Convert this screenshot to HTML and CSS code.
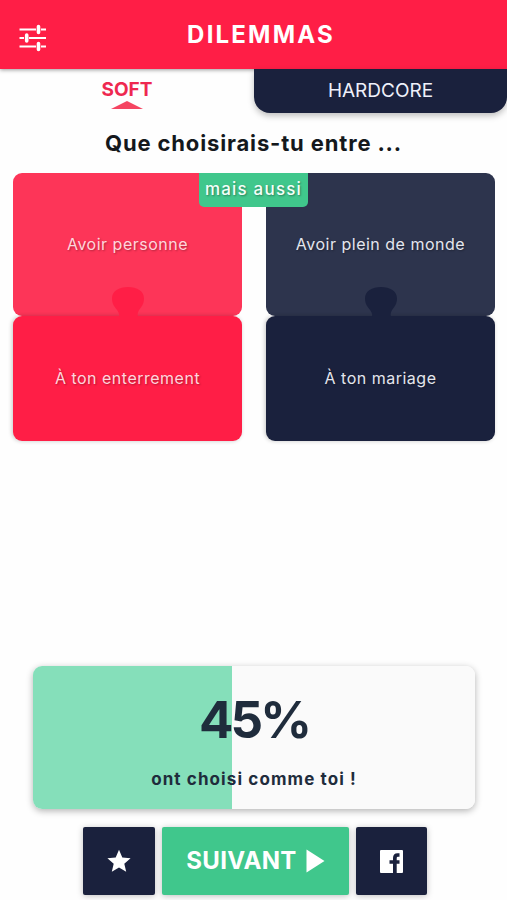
FILE: index.html
```
<!DOCTYPE html>
<html lang="fr">
<head>
<meta charset="UTF-8">
<meta name="viewport" content="width=device-width, initial-scale=1.0">
<title>Dilemmas</title>
<link rel="stylesheet" href="styles.css">
</head>
<body>
  <header class="header">
    <svg class="settings" viewBox="0 0 28 28">
      <path d="M0.500 5.500H17M22 5.500H27M0.500 14H5M10 14H27M0.500 22.500H17M22 22.500H27" stroke="#fff" stroke-width="2"/>
      <path d="M19.500 2.500V8.500M7.700 11V17M19.500 19.500V25.500" stroke="#fff" stroke-width="3.600" stroke-linecap="round"/>
    </svg>
    <h1 class="title">DILEMMAS</h1>
  </header>

  <nav class="tabs">
    <div class="tab tab-soft">
      <span>SOFT</span>
      <span class="arrow"></span>
    </div>
    <div class="tab tab-hardcore">HARDCORE</div>
  </nav>

  <main>
    <h2 class="question">Que choisirais-tu entre ...</h2>

    <div class="choices">
      <div class="choice red">
        <div class="top">
          <span>Avoir personne</span>
          <svg class="knob" viewBox="0 0 34 32"><path d="M8 32C9 29 7 26 4.500 23C2 20 1 17 1 13.500C1 6 8 2 17 2S33 6 33 13.500C33 17 32 20 29.500 23C27 26 26 29 27 32Z"/></svg>
        </div>
        <div class="bottom"><span>À ton enterrement</span></div>
      </div>
      <div class="choice blue">
        <div class="top">
          <span>Avoir plein de monde</span>
          <svg class="knob" viewBox="0 0 34 32"><path d="M8 32C9 29 7 26 4.500 23C2 20 1 17 1 13.500C1 6 8 2 17 2S33 6 33 13.500C33 17 32 20 29.500 23C27 26 26 29 27 32Z"/></svg>
        </div>
        <div class="bottom"><span>À ton mariage</span></div>
      </div>
      <div class="badge">mais aussi</div>
    </div>
  </main>

  <section class="result">
    <div class="percent">45%</div>
    <div class="same">ont choisi comme toi !</div>
  </section>

  <footer class="actions">
    <div class="btn small">
      <svg width="24" height="24" viewBox="0 0 24 24"><path fill="#fff" d="M12 .8l3.300 7.700 8.300.7-6.300 5.500 1.900 8.100L12 18.500l-7.200 4.300 1.900-8.100L.4 9.200l8.300-.7z"/></svg>
    </div>
    <div class="btn next">
      <span>SUIVANT</span>
      <svg width="19" height="24" viewBox="0 0 19 24"><path fill="#fff" d="M0.500 0.500L18.500 12L0.500 23.500Z"/></svg>
    </div>
    <div class="btn small">
      <svg width="23" height="23" viewBox="0 0 23 23">
        <rect width="23" height="23" rx="1" fill="#fff"/>
        <path fill="#1a213d" d="M13 23V13.700H9.500V10.200H13V8Q13 3.200 17.500 3.200H19.500V6.700H18Q16.700 6.700 16.700 8V10.200H19.500V13.700H16.700V23Z"/>
      </svg>
    </div>
  </footer>
</body>
</html>
```
FILE: styles.css
```
* {
  box-sizing: border-box;
}
body {
  margin: 0;
  height: 900px;
  display: flex;
  flex-direction: column;
  background: #fefefe;
  font-family: Inter, "Open Sans", sans-serif;
  overflow: hidden;
}
.header {
  position: relative;
  z-index: 2;
  flex: none;
  height: 69px;
  display: flex;
  align-items: center;
  justify-content: center;
  background: #ff1e46;
  box-shadow: 0 1px 4px rgba(0, 0, 0, 0.4);
}
.settings {
  position: absolute;
  left: 19px;
  top: 24px;
  width: 28px;
  height: 28px;
}
.title {
  margin: 0 0 1px 15px;
  color: #fff;
  font-size: 24px;
  font-weight: 700;
  letter-spacing: 2.2px;
}
.tabs {
  display: flex;
  flex: none;
  height: 44px;
}
.tab {
  display: flex;
  flex-direction: column;
  align-items: center;
  width: 254px;
  font-size: 19px;
  line-height: 24px;
}
.tab-soft {
  padding-top: 9px;
  color: #ee2850;
  font-weight: 700;
}
.arrow {
  width: 32px;
  height: 8px;
  margin-top: -1px;
  background: #f54562;
  clip-path: polygon(50% 0, 100% 100%, 0 100%);
}
.tab-hardcore {
  position: relative;
  z-index: 3;
  width: 253px;
  padding-top: 10px;
  background: #1a213d;
  color: #eef0fa;
  border-radius: 0 0 16px 16px;
  box-shadow: 0 3px 6px rgba(0, 0, 0, 0.25);
}
.question {
  margin: 17px 0 0;
  height: 43px;
  line-height: 27px;
  text-align: center;
  color: #14181c;
  font-size: 22px;
  font-weight: 700;
  letter-spacing: 0.85px;
}
.choices {
  position: relative;
  display: flex;
  gap: 24px;
  padding: 0 12px 0 13px;
}
.choice {
  flex: 1;
  color: #e4e6ee;
  font-size: 16px;
  letter-spacing: 0.5px;
  text-shadow: 1px 1px 2px rgba(0, 0, 0, 0.3);
}
.top,
.bottom {
  position: relative;
  display: flex;
  align-items: center;
  justify-content: center;
  padding-bottom: 2px;
  border-radius: 9px;
}
.top {
  height: 143px;
}
.bottom {
  height: 125px;
  box-shadow: -1px 0 4px rgba(0, 0, 0, 0.22);
}
.red {
  color: #ffd5dc;
}
.red .top {
  background: #fd3558;
}
.red .bottom {
  background: #ff1e46;
}
.red .knob {
  fill: #ff1e46;
}
.blue .top {
  background: #2d344d;
}
.blue .bottom {
  background: #1a213d;
}
.blue .knob {
  fill: #1a213d;
}
.knob {
  position: absolute;
  z-index: 1;
  left: 98px;
  bottom: -1px;
  width: 34px;
  height: 32px;
}
.badge {
  position: absolute;
  z-index: 2;
  left: 199px;
  top: 0;
  width: 109px;
  height: 34px;
  line-height: 33px;
  text-align: center;
  background: #40c78c;
  border-radius: 0 0 5px 5px;
  color: #f4fff9;
  font-size: 17px;
  font-weight: 500;
  letter-spacing: 1.2px;
  text-shadow: 1px 1px 2px rgba(0, 0, 0, 0.35);
}
.result {
  flex: none;
  width: 442px;
  height: 143px;
  margin: auto 0 18px 33px;
  padding-top: 24px;
  text-align: center;
  color: #1f2c3c;
  font-weight: 700;
  background: linear-gradient(to right, #85dfba 199px, #fafafa 199px);
  border-radius: 9px;
  box-shadow: 0 2px 7px rgba(0, 0, 0, 0.3);
}
.percent {
  font-size: 51px;
  line-height: 60px;
  letter-spacing: -3px;
}
.same {
  margin-top: 17px;
  font-size: 17px;
  line-height: 24px;
  letter-spacing: 1.1px;
}
.actions {
  flex: none;
  display: flex;
  gap: 7px;
  margin: 0 0 5px 83px;
}
.btn {
  display: flex;
  align-items: center;
  justify-content: center;
  height: 68px;
  border-radius: 2px;
  box-shadow: 0 1px 6px rgba(0, 0, 0, 0.25);
}
.small {
  width: 72px;
  background: #1a213d;
}
.small:last-child {
  width: 71px;
}
.next {
  gap: 9px;
  width: 187px;
  padding-bottom: 1px;
  background: #40c78c;
  color: #fff;
  font-size: 24px;
  font-weight: 700;
  letter-spacing: 0.3px;
}
```
